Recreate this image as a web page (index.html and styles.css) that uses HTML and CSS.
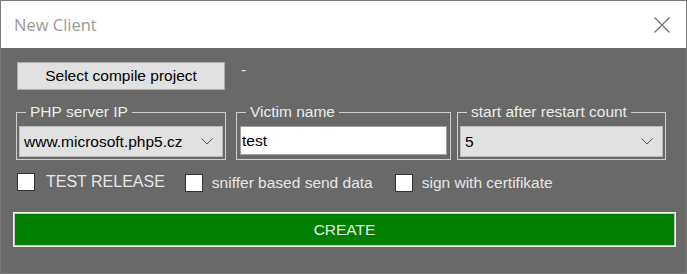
FILE: index.html
```html
<!DOCTYPE html>
<html lang="en">
<head>
    <meta charset="UTF-8">
    <title>New Client</title>
    <link rel="stylesheet" href="styles.css">
</head>
<body>

    <div class="window">
        <div class="titlebar">
            <span class="title">New Client</span>
            <svg class="close" width="16" height="16" viewBox="0 0 16 16">
                <path d="M0.5 0.5 L15.5 15.5 M15.5 0.5 L0.5 15.5" stroke="#6a6a6a" stroke-width="1.1" fill="none"/>
            </svg>
        </div>

        <div class="content">
            <div class="top-row">
                <button class="btn-select">Select compile project</button>
                <span class="project-label">-</span>
            </div>

            <div class="group-row">
                <fieldset class="group group-ip">
                    <legend>PHP server IP</legend>
                    <div class="combo">
                        <span>www.microsoft.php5.cz</span>
                        <svg width="12" height="7" viewBox="0 0 12 7"><path d="M0.5 0.5 L6 6 L11.5 0.5" stroke="#555" fill="none"/></svg>
                    </div>
                </fieldset>
                <fieldset class="group group-name">
                    <legend>Victim name</legend>
                    <div class="textbox">test</div>
                </fieldset>
                <fieldset class="group group-count">
                    <legend>start after restart count</legend>
                    <div class="combo">
                        <span>5</span>
                        <svg width="12" height="7" viewBox="0 0 12 7"><path d="M0.5 0.5 L6 6 L11.5 0.5" stroke="#555" fill="none"/></svg>
                    </div>
                </fieldset>
            </div>

            <div class="check-row">
                <label class="check check-test"><span class="box"></span><span>TEST RELEASE</span></label>
                <label class="check check-sniff"><span class="box"></span><span>sniffer based send data</span></label>
                <label class="check check-sign"><span class="box"></span><span>sign with certifikate</span></label>
            </div>

            <button class="btn-create">CREATE</button>
        </div>
    </div>

</body>
</html>
```

FILE: styles.css
```css
body {
    margin: 0;
    background-color: #696969;
    font-family: "Liberation Sans", Arial, sans-serif;
}

.window {
    width: 687px;
    height: 274px;
    box-sizing: border-box;
    border: 1px solid #7a7a7a;
    background-color: #696969;
    display: flex;
    flex-direction: column;
}

.titlebar {
    height: 47px;
    background-color: #ffffff;
    display: flex;
    align-items: center;
    justify-content: space-between;
    padding: 0 16px 1px 13px;
    box-sizing: border-box;
}

.title {
    font-family: "Open Sans", "Noto Sans", sans-serif;
    font-size: 16.5px;
    color: #9a9a9a;
}

.close {
    margin-top: 1px;
}

.content {
    flex: 1;
    padding: 14px 0 0 16px;
    font-size: 15.5px;
}

.top-row {
    display: flex;
    align-items: flex-start;
}

.btn-select {
    width: 208px;
    height: 28px;
    background-color: #e1e1e1;
    border: 1px solid #adadad;
    font-family: inherit;
    font-size: 15.5px;
    color: #000;
    padding: 0;
}

.project-label {
    margin-left: 16px;
    color: #e8e8e8;
    line-height: 16px;
}

.group-row {
    display: flex;
    margin-top: 13px;
}

.group {
    margin: 0;
    padding: 5px 2px 2px 2px;
    border: 1px solid #cfcfcf;
    box-sizing: border-box;
}

.group legend {
    margin-left: 7px;
    padding: 0 4px;
    color: #ececec;
    line-height: 18px;
}

.group-ip {
    width: 210px;
    margin-left: -1px;
}

.group-name {
    width: 215px;
    margin-left: 10px;
}

.group-count {
    width: 209px;
    margin-left: 6px;
}

.combo {
    height: 31px;
    box-sizing: border-box;
    background-color: #e1e1e1;
    border: 1px solid #bdbdbd;
    display: flex;
    align-items: center;
    justify-content: space-between;
    padding: 0 9px 0 4px;
    color: #000;
}

.textbox {
    height: 29px;
    box-sizing: border-box;
    background-color: #ffffff;
    border: 1px solid #a0a0a0;
    margin: 0 1px 2px 1px;
    padding: 2px 1px 0;
    line-height: 24px;
    color: #000;
}

.check-row {
    display: flex;
    align-items: center;
    margin-top: 13px;
    height: 20px;
}

.check {
    display: flex;
    align-items: center;
    color: #e6e6e6;
}

.check .box {
    width: 18px;
    height: 18px;
    box-sizing: border-box;
    background-color: #ffffff;
    border: 1px solid #333;
}

.check-test {
    font-size: 16px;
    margin-top: -2px;
}

.check-test .box {
    margin-right: 11px;
}

.check-sniff {
    margin-left: 20px;
}

.check-sniff .box,
.check-sign .box {
    margin-right: 9px;
}

.check-sign {
    margin-left: 22px;
}

.btn-create {
    display: block;
    margin: 19px 0 0 -4px;
    width: 663px;
    height: 35px;
    background-color: #007f00;
    border: 1px solid #f0f0f0;
    box-shadow: inset 0 0 0 1px #c6c6c6;
    color: #e4ece4;
    font-family: inherit;
    font-size: 15.5px;
    padding: 0;
}
```
